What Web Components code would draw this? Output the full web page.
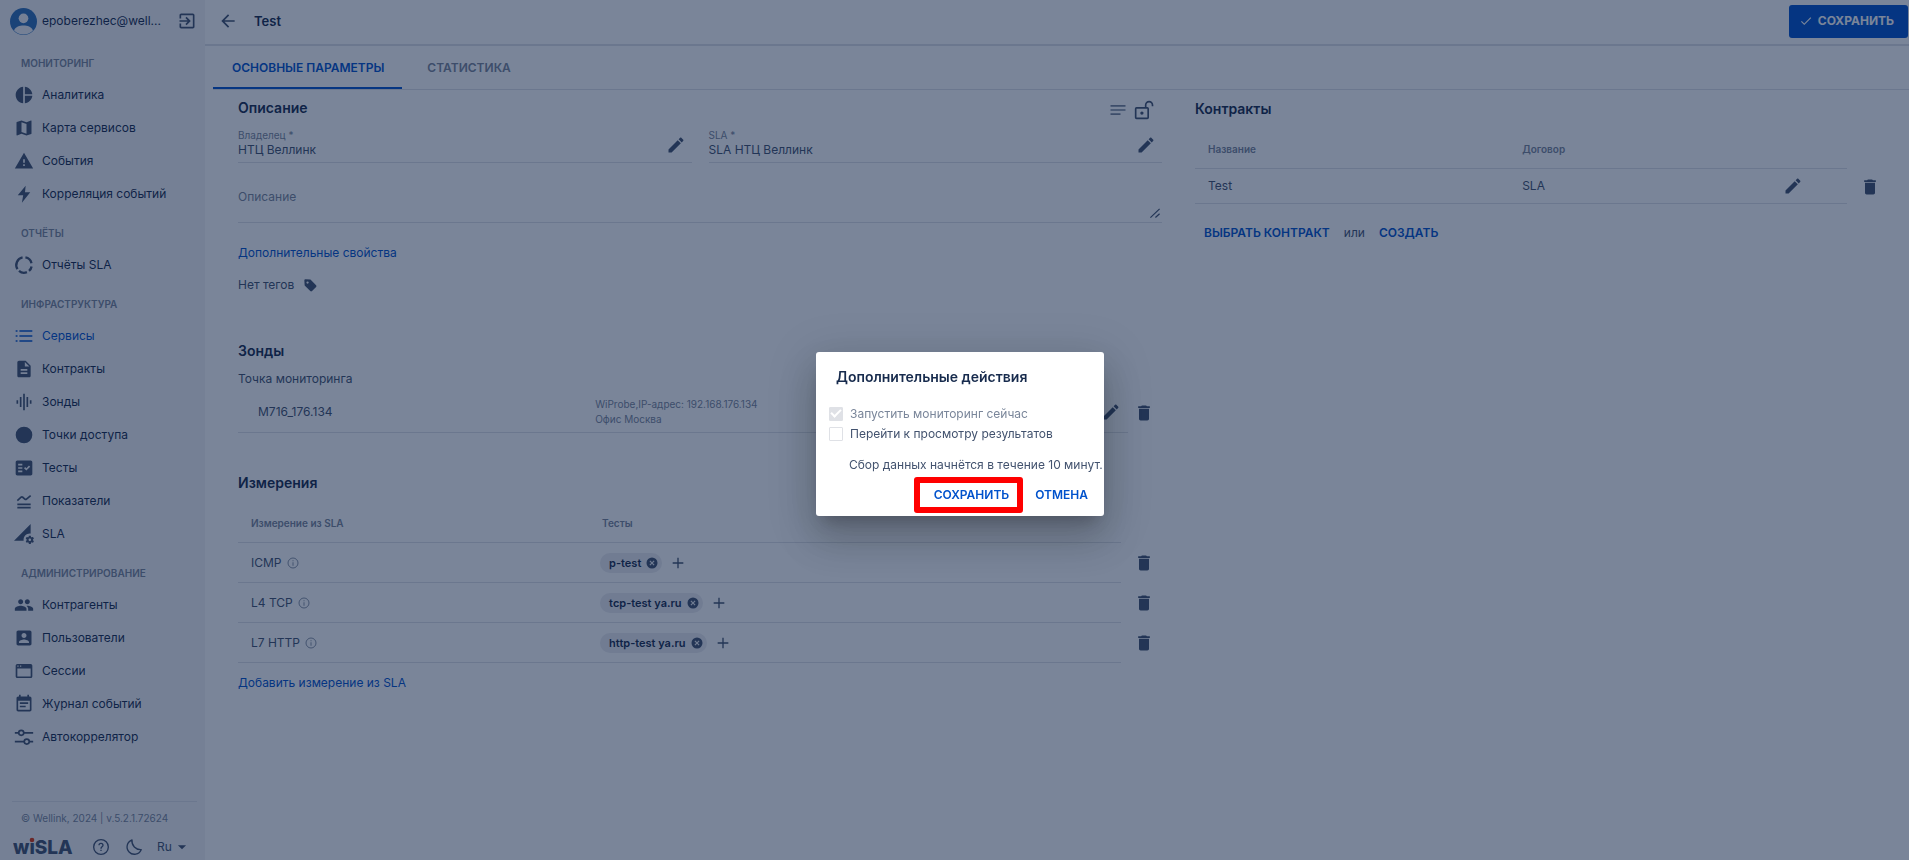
<!DOCTYPE html>
<html lang="ru">
<head>
<meta charset="utf-8">
<title>Test — wiSLA</title>
<style>
  :root {
    --text: #172b4d;
    --text-soft: #42526e;
    --text-muted: #7a869a;
    --primary: #0052cc;
    --line: #dfe1e6;
    --panel: #f4f5f7;
    --backdrop: rgba(9, 30, 66, 0.54);
  }
  body {
    margin: 0;
    font: 12px/16px Inter, "Liberation Sans", sans-serif;
    color: var(--text-soft);
    background: #fff;
  }
</style>
</head>
<body>

<app-shell>
  <side-menu slot="menu" user="epoberezhec@well..." version="© Wellink, 2024 | v.5.2.1.72624">
    <menu-group heading="МОНИТОРИНГ">
      <menu-item icon="pie">Аналитика</menu-item>
      <menu-item icon="map">Карта сервисов</menu-item>
      <menu-item icon="warning">События</menu-item>
      <menu-item icon="bolt">Корреляция событий</menu-item>
    </menu-group>
    <menu-group heading="ОТЧЁТЫ">
      <menu-item icon="donut">Отчёты SLA</menu-item>
    </menu-group>
    <menu-group heading="ИНФРАСТРУКТУРА">
      <menu-item icon="list" active>Сервисы</menu-item>
      <menu-item icon="document">Контракты</menu-item>
      <menu-item icon="equalizer">Зонды</menu-item>
      <menu-item icon="circle">Точки доступа</menu-item>
      <menu-item icon="checklist">Тесты</menu-item>
      <menu-item icon="metrics">Показатели</menu-item>
      <menu-item icon="signal">SLA</menu-item>
    </menu-group>
    <menu-group heading="АДМИНИСТРИРОВАНИЕ">
      <menu-item icon="people">Контрагенты</menu-item>
      <menu-item icon="user">Пользователи</menu-item>
      <menu-item icon="window">Сессии</menu-item>
      <menu-item icon="calendar">Журнал событий</menu-item>
      <menu-item icon="sliders">Автокоррелятор</menu-item>
    </menu-group>
  </side-menu>

  <page-header heading="Test" action="СОХРАНИТЬ"></page-header>
  <tab-strip tabs="ОСНОВНЫЕ ПАРАМЕТРЫ|СТАТИСТИКА"></tab-strip>

  <page-columns>
    <service-form slot="left"></service-form>
    <probe-list slot="left"></probe-list>
    <measure-table slot="left"></measure-table>
    <contract-list slot="right"></contract-list>
  </page-columns>
</app-shell>

<confirm-dialog heading="Дополнительные действия"></confirm-dialog>

<script>
// Контуры иконок, сетка 24x24
const ICONS = {
  pie: '<path d="M11 2v20c-5.07-.5-9-4.79-9-10s3.93-9.5 9-10zm2.03 0v8.99H22c-.47-4.74-4.24-8.52-8.97-8.99zm0 11.01V22c4.74-.47 8.5-4.25 8.97-8.99h-8.97z"/>',
  map: '<path d="M20.5 3l-.16.03L15 5.1 9 3 3.36 4.9c-.21.07-.36.25-.36.48V20.5c0 .28.22.5.5.5l.16-.03L9 18.9l6 2.1 5.64-1.9c.21-.07.36-.25.36-.48V3.5c0-.28-.22-.5-.5-.5zM15 19l-6-2.11V5l6 2.11V19z"/>',
  warning: '<path d="M1 21h22L12 2 1 21zm12-3h-2v-2h2v2zm0-4h-2v-4h2v4z"/>',
  bolt: '<path d="M14 2 4.500 13.500H11L9.500 22.500 19.500 10H13.200z"/>',
  donut: '<g fill="none" stroke="currentColor" stroke-width="2.800"><path d="M13.700 2.900A9.300 9.300 0 0 1 21 9.800"/><path d="M21.100 13.700A9.300 9.300 0 0 1 18 19.100"/><path d="M15.500 20.600A9.300 9.300 0 0 1 6 19.100"/><path d="M4.200 17A9.300 9.300 0 0 1 10.300 2.900"/></g>',
  list: '<path d="M2 5h2.200v2H2zM2 11h2.200v2H2zM2 17h2.200v2H2zM6.500 5H22v2H6.500zM6.500 11H22v2H6.500zM6.500 17H22v2H6.500z"/>',
  document: '<path d="M14 2H6c-1.1 0-2 .9-2 2v16c0 1.100.9 2 2 2h12c1.100 0 2-.9 2-2V8l-6-6zm2 16H8v-2h8v2zm0-4H8v-2h8v2zm-3-5V3.500L18.500 9H13z"/>',
  equalizer: '<path d="M7 18h2V6H7v12zm4 4h2V2h-2v20zm-8-8h2v-4H3v4zm12 4h2V6h-2v12zm4-8v4h2v-4h-2z"/>',
  circle: '<circle cx="12" cy="12" r="10"/>',
  checklist: '<path d="M20 3H4c-1.1 0-2 .9-2 2v14c0 1.100.9 2 2 2h16c1.100 0 2-.9 2-2V5c0-1.100-.9-2-2-2zM10 17H5v-2h5v2zm0-4H5v-2h5v2zm0-4H5V7h5v2zm4.820 6L12 12.160l1.410-1.410 1.410 1.420L17.990 9l1.420 1.420L14.820 15z"/>',
  metrics: '<path d="M4 15h16v2H4zM4 19h16v2H4z"/><path d="M4 11.500 8.500 7.500q1-.8 2 0l2.500 2.200q1 .8 2 0L20 5.500" fill="none" stroke="currentColor" stroke-width="2"/>',
  signal: '<path d="M18.99 11.5c.34 0 .67.03 1 .07L20 0 0 20h11.56c-.04-.33-.07-.66-.07-1 0-4.14 3.36-7.5 7.5-7.5zm3.71 7.99c.02-.16.04-.32.04-.49 0-.17-.01-.33-.04-.49l1.06-.83c.09-.08.12-.21.06-.32l-1-1.73c-.06-.11-.19-.15-.31-.11l-1.24.5c-.26-.2-.54-.37-.85-.49l-.19-1.32c-.01-.12-.12-.21-.24-.21h-2c-.12 0-.23.09-.25.21l-.19 1.32c-.3.13-.59.29-.85.49l-1.24-.5c-.11-.04-.24 0-.31.11l-1 1.73c-.06.11-.04.24.06.32l1.06.83c-.02.16-.03.32-.03.49 0 .17.01.33.03.49l-1.06.83c-.09.08-.12.21-.06.32l1 1.73c.06.11.19.15.31.11l1.24-.5c.26.2.54.37.85.49l.19 1.32c.02.12.12.21.25.21h2c.12 0 .23-.09.25-.21l.19-1.32c.3-.13.59-.29.84-.49l1.25.5c.11.04.24 0 .31-.11l1-1.73c.06-.11.03-.24-.06-.32l-1.07-.83zm-3.71 1.01c-.83 0-1.5-.67-1.5-1.5s.67-1.5 1.5-1.5 1.5.67 1.5 1.5-.67 1.5-1.5 1.5z"/>',
  people: '<path d="M16 11c1.66 0 2.99-1.34 2.99-3S17.66 5 16 5c-1.66 0-3 1.34-3 3s1.34 3 3 3zm-8 0c1.66 0 2.99-1.34 2.99-3S9.66 5 8 5C6.34 5 5 6.34 5 8s1.34 3 3 3zm0 2c-2.33 0-7 1.17-7 3.5V19h14v-2.5c0-2.33-4.67-3.5-7-3.5zm8 0c-.29 0-.62.02-.97.05 1.16.84 1.97 1.97 1.97 3.45V19h6v-2.5c0-2.33-4.67-3.5-7-3.5z"/>',
  user: '<path d="M3 5v14c0 1.1.89 2 2 2h14c1.1 0 2-.9 2-2V5c0-1.1-.9-2-2-2H5c-1.11 0-2 .9-2 2zm12 4c0 1.66-1.34 3-3 3s-3-1.34-3-3 1.34-3 3-3 3 1.34 3 3zm-9 8c0-2 4-3.1 6-3.1s6 1.1 6 3.1v1H6v-1z"/>',
  window: '<path fill-rule="evenodd" d="M4 3.500h16a2 2 0 0 1 2 2v13a2 2 0 0 1-2 2H4a2 2 0 0 1-2-2v-13a2 2 0 0 1 2-2zM4 9v9.500h16V9zM4 5.500V7h1.500V5.500zM7.200 5.500V7h1.500V5.500z"/>',
  calendar: '<path d="M17 10H7v2h10v-2zm2-7h-1V1h-2v2H8V1H6v2H5c-1.11 0-1.99.9-1.99 2L3 19c0 1.1.89 2 2 2h14c1.1 0 2-.9 2-2V5c0-1.1-.9-2-2-2zm0 16H5V8h14v11zm-5-5H7v2h7v-2z"/>',
  sliders: '<g fill="none" stroke="currentColor" stroke-width="2"><path d="M1 7h4.500M12 7h11M1 17.500h11M18.500 17.500H23"/><circle cx="8.700" cy="7" r="3"/><circle cx="15.300" cy="17.500" r="3"/></g>',
  logout: '<path d="M10.09 15.59L11.5 17l5-5-5-5-1.41 1.41L12.67 11H3v2h9.67l-2.58 2.59zM19 3H5c-1.11 0-2 .9-2 2v4h2V5h14v14H5v-4H3v4c0 1.1.89 2 2 2h14c1.1 0 2-.9 2-2V5c0-1.1-.9-2-2-2z"/>',
  back: '<path d="M20 11H7.83l5.59-5.59L12 4l-8 8 8 8 1.41-1.41L7.83 13H20v-2z"/>',
  check: '<path d="M9 16.170 4.830 12l-1.420 1.410L9 19 21 7l-1.410-1.410z"/>',
  edit: '<path d="M3 17.25V21h3.75L17.81 9.94l-3.75-3.75L3 17.25zM20.71 7.04c.39-.39.39-1.02 0-1.41l-2.34-2.34c-.39-.39-1.02-.39-1.41 0l-1.83 1.83 3.75 3.75 1.83-1.83z"/>',
  trash: '<path d="M6 19c0 1.1.9 2 2 2h8c1.1 0 2-.9 2-2V7H6v12zM19 4h-3.500l-1-1h-5l-1 1H5v2h14V4z"/>',
  notes: '<path d="M3 18h12v-2H3v2zM3 6v2h18V6H3zm0 7h18v-2H3v2z"/>',
  unlock: '<g fill="none" stroke="currentColor" stroke-width="2"><rect x="2" y="9.500" width="15" height="12.500" rx="1"/><path d="M14 9.500V6a4 4 0 0 1 8.200 0v1.500"/></g><circle cx="9.500" cy="15.700" r="2"/>',
  tag: '<path d="M3 4.500 3.500 12.500 12.200 21.300c.8.8 2 .8 2.800 0l6.300-6.300c.8-.8.8-2 0-2.800L12.500 3.400 4.800 2.800A1.700 1.700 0 0 0 3 4.500zM8 9.800A1.800 1.800 0 1 1 8 6.200a1.800 1.800 0 0 1 0 3.600z" transform="translate(-1 -1) scale(1.100)"/>',
  info: '<g fill="none" stroke="currentColor" stroke-width="1.800"><circle cx="12" cy="12" r="10"/><path d="M12 10.500V17.500M12 6.500V8.500"/></g>',
  plus: '<path d="M20 13h-7v7h-2v-7H4v-2h7V4h2v7h7z"/>',
  clear: '<path d="M12 1a11 11 0 1 0 0 22 11 11 0 0 0 0-22zm5 14.300L15.300 17 12 13.700 8.700 17 7 15.300l3.300-3.300L7 8.700 8.700 7l3.300 3.300L15.300 7 17 8.700 13.700 12z"/>',
  help: '<circle cx="12" cy="12" r="11" fill="none" stroke="currentColor" stroke-width="2"/><path d="M11 16h2v2h-2zM12 5.500a4 4 0 0 0-4 4h2a2 2 0 0 1 4 0c0 2-3 1.800-3 5h2c0-2.200 3-2.500 3-5a4 4 0 0 0-4-4z"/>',
  moon: '<path d="M9 1.500A11 11 0 1 0 22.800 16 13 13 0 0 1 9 1.500z" fill="none" stroke="currentColor" stroke-width="2" stroke-linejoin="round"/>',
  caret: '<path d="M5 9l7 7 7-7z"/>',
  grip: '<path d="M1 23 23 2M13 23l10-9" fill="none" stroke="currentColor" stroke-width="3"/>',
  avatar: '<circle cx="12" cy="12" r="12" fill="#2f6fb8"/><circle cx="12" cy="9.200" r="4.300" fill="#f4f5f7"/><path d="M3.600 20C5 16.500 8.500 15.600 12 15.600s7 .9 8.400 4.400a11.600 11.600 0 0 1-16.800 0z" fill="#f4f5f7"/>'
};

// Общие правила для всех теневых деревьев
const BASE = `
  *, :host { box-sizing: border-box; }
  button { font: inherit; color: inherit; background: none; border: 0; padding: 0; cursor: pointer; display: inline-flex; align-items: center; }
  a { color: var(--primary); text-decoration: none; }
  h1, h2, h3, p { margin: 0; }
  h2 { font-size: 14px; line-height: 20px; font-weight: 600; color: var(--text); }
`;

class BaseElement extends HTMLElement {
  constructor() {
    super();
    this.attachShadow({ mode: 'open' });
  }
  connectedCallback() {
    this.shadowRoot.innerHTML = `<style>${BASE}${this.styles()}</style>${this.render()}`;
  }
  styles() { return ''; }
  render() { return '<slot></slot>'; }
}

class AppIcon extends BaseElement {
  styles() {
    return `
      :host { display: inline-flex; flex: none; }
      svg { width: var(--icon-size, 20px); height: var(--icon-size, 20px); fill: currentColor; display: block; }
    `;
  }
  render() {
    return `<svg viewBox="0 0 24 24" aria-hidden="true" overflow="visible">${ICONS[this.getAttribute('name')]}</svg>`;
  }
}

class AppShell extends BaseElement {
  styles() {
    return `
      :host { display: grid; grid-template-columns: 205px minmax(0, 1fr); min-height: 100vh; }
      main { display: flex; flex-direction: column; }
    `;
  }
  render() {
    return `<slot name="menu"></slot><main><slot></slot></main>`;
  }
}

class SideMenu extends BaseElement {
  styles() {
    return `
      :host { display: flex; flex-direction: column; background: var(--panel); }
      .user { display: flex; align-items: center; gap: 5px; height: 42px; padding: 0 8px 0 10px; color: var(--text); }
      .user > app-icon { --icon-size: 27px; }
      .user span { flex: 1; }
      .user button { color: var(--text-soft); }
      nav { display: flex; flex-direction: column; gap: 9px; padding-top: 7px; flex: 1; }
      .version { margin: 0 8px 0 12px; padding: 8px 9px 0; border-top: 1px solid var(--line); font-size: 10px; color: var(--text-muted); }
      footer { display: flex; align-items: center; height: 26px; margin: 8px 0 0; padding-left: 13px; }
      footer svg { width: 62px; height: 22px; }
      .help { margin-left: 18px; --icon-size: 16px; }
      .theme { margin-left: 17px; --icon-size: 16px; }
      .lang { margin-left: 15px; gap: 3px; --icon-size: 14px; }
    `;
  }
  render() {
    return `
      <div class="user">
        <app-icon name="avatar"></app-icon>
        <span>${this.getAttribute('user')}</span>
        <button aria-label="Выйти"><app-icon name="logout"></app-icon></button>
      </div>
      <nav><slot></slot></nav>
      <p class="version">${this.getAttribute('version')}</p>
      <footer>
        <svg viewBox="0 0 62 22" role="img" aria-label="wiSLA">
          <text x="0" y="18" font-size="19" font-weight="800" fill="#42526e">wiSLA</text>
          <rect x="16" y="1" width="7" height="6" fill="#f4f5f7"/>
          <circle cx="19" cy="4" r="2.300" fill="#de350b"/>
        </svg>
        <button class="help" aria-label="Помощь"><app-icon name="help"></app-icon></button>
        <button class="theme" aria-label="Тема"><app-icon name="moon"></app-icon></button>
        <button class="lang">Ru <app-icon name="caret"></app-icon></button>
      </footer>
    `;
  }
}

class MenuGroup extends BaseElement {
  styles() {
    return `
      :host { display: block; }
      h3 { height: 29px; line-height: 29px; padding-left: 21px; font-size: 10px; font-weight: 600; color: var(--text-muted); }
    `;
  }
  render() {
    return `<h3>${this.getAttribute('heading')}</h3><slot></slot>`;
  }
}

class MenuItem extends BaseElement {
  styles() {
    return `
      :host { display: block; }
      a { display: flex; align-items: center; gap: 8px; height: 33px; padding-left: 14px; color: var(--text); }
      app-icon { color: var(--text-soft); }
      :host([active]) a, :host([active]) app-icon { color: var(--primary); }
    `;
  }
  render() {
    return `<a href="#"><app-icon name="${this.getAttribute('icon')}"></app-icon><slot></slot></a>`;
  }
}

class PageHeader extends BaseElement {
  styles() {
    return `
      :host { display: flex; align-items: center; height: 46px; padding: 0 1px 2px 13px; border-bottom: 2px solid var(--line); }
      h1 { flex: 1; margin-left: 16px; font-size: 13px; font-weight: 600; color: var(--text); }
      .save { height: 33px; padding: 0 14px 0 10px; gap: 5px; border-radius: 3px; background: var(--primary); color: #fff; font-weight: 700; --icon-size: 14px; }
    `;
  }
  render() {
    return `
      <button aria-label="Назад"><app-icon name="back"></app-icon></button>
      <h1>${this.getAttribute('heading')}</h1>
      <button class="save"><app-icon name="check"></app-icon>${this.getAttribute('action')}</button>
    `;
  }
}

class TabStrip extends BaseElement {
  styles() {
    return `
      :host { display: flex; gap: 6px; height: 44px; margin-left: 8px; border-bottom: 1px solid var(--line); }
      button { padding: 2px 18px 0 19px; font-weight: 600; color: var(--text-muted); border-bottom: 2px solid transparent; }
      button[aria-selected="true"] { color: var(--primary); border-color: var(--primary); }
    `;
  }
  render() {
    this.setAttribute('role', 'tablist');
    return this.getAttribute('tabs').split('|')
      .map((name, i) => `<button role="tab" aria-selected="${i === 0}">${name}</button>`)
      .join('');
  }
}

class PageColumns extends BaseElement {
  styles() {
    return `
      :host { display: grid; grid-template-columns: 22fr 17fr; gap: 33px; padding-left: 33px; }
    `;
  }
  render() {
    return `<div><slot name="left"></slot></div><div><slot name="right"></slot></div>`;
  }
}

// Поле с подписью и кнопкой редактирования
class FormField extends BaseElement {
  styles() {
    return `
      :host { display: flex; align-items: center; padding-right: 6px; border-bottom: 1px solid var(--line); }
      div { flex: 1; padding-bottom: 4px; }
      label { display: block; font-size: 10px; line-height: 14px; color: var(--text-muted); }
      input { display: block; width: 100%; height: 16px; padding: 0; border: 0; outline: 0; background: none; font: inherit; color: inherit; }
    `;
  }
  render() {
    return `
      <div>
        <label for="value">${this.getAttribute('label')}</label>
        <input id="value" value="${this.getAttribute('value')}" readonly>
      </div>
      <button aria-label="Изменить"><app-icon name="edit"></app-icon></button>
    `;
  }
}

class ServiceForm extends BaseElement {
  styles() {
    return `
      :host { display: block; padding-top: 8px; }
      .head { display: flex; align-items: flex-start; gap: 6px; padding-right: 8px; margin-bottom: 6px; }
      .head h2 { flex: 1; }
      .head button { height: 24px; }
      .head button:first-of-type { color: var(--text-muted); }
      .fields { display: grid; grid-template-columns: 1fr 1fr; gap: 17px; }
      .area { position: relative; margin-top: 20px; padding-bottom: 3px; border-bottom: 1px solid var(--line); }
      .area app-icon { position: absolute; right: 2px; bottom: 4px; --icon-size: 10px; }
      textarea { display: block; width: 100%; height: 36px; padding: 6px 0; border: 0; outline: 0; background: none; font: inherit; color: inherit; resize: none; }
      textarea::placeholder { color: var(--text-muted); }
      .extra { display: block; margin-top: 22px; }
      .tags { display: flex; align-items: center; gap: 9px; margin-top: 16px; --icon-size: 14px; }
    `;
  }
  render() {
    return `
      <div class="head">
        <h2>Описание</h2>
        <button aria-label="Заметки"><app-icon name="notes"></app-icon></button>
        <button aria-label="Доступ"><app-icon name="unlock"></app-icon></button>
      </div>
      <div class="fields">
        <form-field label="Владелец *" value="НТЦ Веллинк"></form-field>
        <form-field label="SLA *" value="SLA НТЦ Веллинк"></form-field>
      </div>
      <div class="area">
        <textarea placeholder="Описание" aria-label="Описание"></textarea>
        <app-icon name="grip"></app-icon>
      </div>
      <a class="extra" href="#">Дополнительные свойства</a>
      <div class="tags">Нет тегов <button aria-label="Теги"><app-icon name="tag"></app-icon></button></div>
    `;
  }
}

class ProbeList extends BaseElement {
  styles() {
    return `
      :host { display: block; padding-top: 48px; }
      p { margin-top: 10px; }
      .row { display: flex; margin-top: 5px; height: 41px; padding-right: 8px; align-items: center; }
      .probe { flex: 1; height: 41px; display: grid; grid-template-columns: 2fr 3fr auto; align-items: center; padding: 0 7px 0 20px; border-bottom: 1px solid var(--line); }
      .row > button { margin-left: 6px; }
      small { font-size: 10px; line-height: 15px; color: var(--text-muted); }
    `;
  }
  render() {
    return `
      <h2>Зонды</h2>
      <p>Точка мониторинга</p>
      <div class="row">
        <div class="probe">
          <span>M716_176.134</span>
          <small>WiProbe,IP-адрес: 192.168.176.134<br>Офис Москва</small>
          <button aria-label="Изменить"><app-icon name="edit"></app-icon></button>
        </div>
        <button aria-label="Удалить"><app-icon name="trash"></app-icon></button>
      </div>
    `;
  }
}

const TABLE = `
  table { width: 100%; border-spacing: 0; table-layout: fixed; }
  th, td { padding: 0 13px; text-align: left; border-bottom: 1px solid var(--line); }
  th { height: 39px; font-size: 10px; font-weight: 600; color: var(--text-muted); }
  th:last-child, td:last-child { padding: 0; border: 0; }
  td button { vertical-align: middle; }
`;

class TagChip extends BaseElement {
  styles() {
    return `
      :host { display: inline-flex; align-items: center; gap: 5px; height: 20px; padding: 0 4px 0 9px; border-radius: 10px; background: #ebecf0; color: var(--text); font-size: 11px; font-weight: 600; --icon-size: 12px; }
      button { color: var(--text-soft); }
    `;
  }
  render() {
    return `<slot></slot><button aria-label="Убрать"><app-icon name="clear"></app-icon></button>`;
  }
}

class MeasureTable extends BaseElement {
  styles() {
    return `${TABLE}
      :host { display: block; padding-top: 40px; }
      table { margin: 11px 0 12px; }
      td { height: 40px; }
      th:first-child { width: 38%; }
      th:last-child { width: 41px; }
      td:last-child { padding-left: 13px; }
      .name { display: flex; align-items: center; gap: 5px; }
      .name app-icon { --icon-size: 12px; color: var(--text-muted); }
      .tests { display: flex; align-items: center; gap: 8px; margin-left: -2px; }
      .tests > button { --icon-size: 16px; }
    `;
  }
  render() {
    const rows = [['ICMP', 'p-test'], ['L4 TCP', 'tcp-test ya.ru'], ['L7 HTTP', 'http-test ya.ru']];
    return `
      <h2>Измерения</h2>
      <table>
        <thead><tr><th>Измерение из SLA</th><th>Тесты</th><th></th></tr></thead>
        <tbody>
          ${rows.map(([name, test]) => `
            <tr>
              <td><span class="name">${name} <app-icon name="info"></app-icon></span></td>
              <td><div class="tests"><tag-chip>${test}</tag-chip><button aria-label="Добавить тест"><app-icon name="plus"></app-icon></button></div></td>
              <td><button aria-label="Удалить"><app-icon name="trash"></app-icon></button></td>
            </tr>`).join('')}
        </tbody>
      </table>
      <a href="#">Добавить измерение из SLA</a>
    `;
  }
}

class ContractList extends BaseElement {
  styles() {
    return `${TABLE}
      :host { display: block; padding-top: 9px; }
      table { margin: 11px 0 21px; }
      td { height: 35px; }
      th:first-child { width: 44%; }
      th:last-child { width: 62px; }
      td:last-child { padding-left: 13px; }
      td:nth-child(3) { text-align: right; padding-right: 44px; }
      .links { display: flex; gap: 14px; padding-left: 9px; }
      .links button { color: var(--primary); font-weight: 600; }
    `;
  }
  render() {
    return `
      <h2>Контракты</h2>
      <table>
        <thead><tr><th>Название</th><th>Договор</th><th></th><th></th></tr></thead>
        <tbody>
          <tr>
            <td>Test</td>
            <td>SLA</td>
            <td><button aria-label="Изменить"><app-icon name="edit"></app-icon></button></td>
            <td><button aria-label="Удалить"><app-icon name="trash"></app-icon></button></td>
          </tr>
        </tbody>
      </table>
      <div class="links"><button>ВЫБРАТЬ КОНТРАКТ</button> или <button>СОЗДАТЬ</button></div>
    `;
  }
}

class ConfirmDialog extends BaseElement {
  styles() {
    return `
      :host { position: fixed; inset: 0; display: flex; align-items: center; justify-content: center; padding: 7px 0 0 11px; background: var(--backdrop); }
      section {
        width: 288px; padding: 15px 0 3px 13px; border-radius: 3px; background: #fff; color: var(--text-soft);
        box-shadow: 0 11px 15px -7px rgba(0, 0, 0, .2), 0 24px 38px 3px rgba(0, 0, 0, .14), 0 9px 46px 8px rgba(0, 0, 0, .12);
      }
      h2 { margin: 0 0 17px 7px; }
      label { display: flex; align-items: center; gap: 7px; height: 20px; }
      label.off { color: var(--text-muted); }
      input { appearance: none; width: 14px; height: 14px; margin: 0; border: 1px solid var(--line); border-radius: 1px; }
      input:checked { display: grid; place-items: center; background: var(--line); }
      input:checked::before { content: ""; width: 8px; height: 4px; margin-bottom: 3px; border: solid #fff; border-width: 0 0 2px 2px; rotate: -45deg; }
      p { margin: 13px 0 4px 20px; white-space: nowrap; }
      .actions { display: flex; justify-content: flex-end; align-items: center; gap: 12px; padding-right: 16px; }
      .actions button { color: var(--primary); font-weight: 600; }
      .marked { height: 36px; padding: 0 8px 0 14px; border: 6px solid #f00; border-radius: 3px; }
    `;
  }
  render() {
    return `
      <section role="dialog" aria-modal="true" aria-labelledby="title">
        <h2 id="title">${this.getAttribute('heading')}</h2>
        <label class="off"><input type="checkbox" checked disabled>Запустить мониторинг сейчас</label>
        <label><input type="checkbox">Перейти к просмотру результатов</label>
        <p>Сбор данных начнётся в течение 10 минут.</p>
        <div class="actions">
          <button class="marked">СОХРАНИТЬ</button>
          <button>ОТМЕНА</button>
        </div>
      </section>
    `;
  }
}

customElements.define('app-icon', AppIcon);
customElements.define('app-shell', AppShell);
customElements.define('side-menu', SideMenu);
customElements.define('menu-group', MenuGroup);
customElements.define('menu-item', MenuItem);
customElements.define('page-header', PageHeader);
customElements.define('tab-strip', TabStrip);
customElements.define('page-columns', PageColumns);
customElements.define('form-field', FormField);
customElements.define('service-form', ServiceForm);
customElements.define('probe-list', ProbeList);
customElements.define('tag-chip', TagChip);
customElements.define('measure-table', MeasureTable);
customElements.define('contract-list', ContractList);
customElements.define('confirm-dialog', ConfirmDialog);
</script>
</body>
</html>
